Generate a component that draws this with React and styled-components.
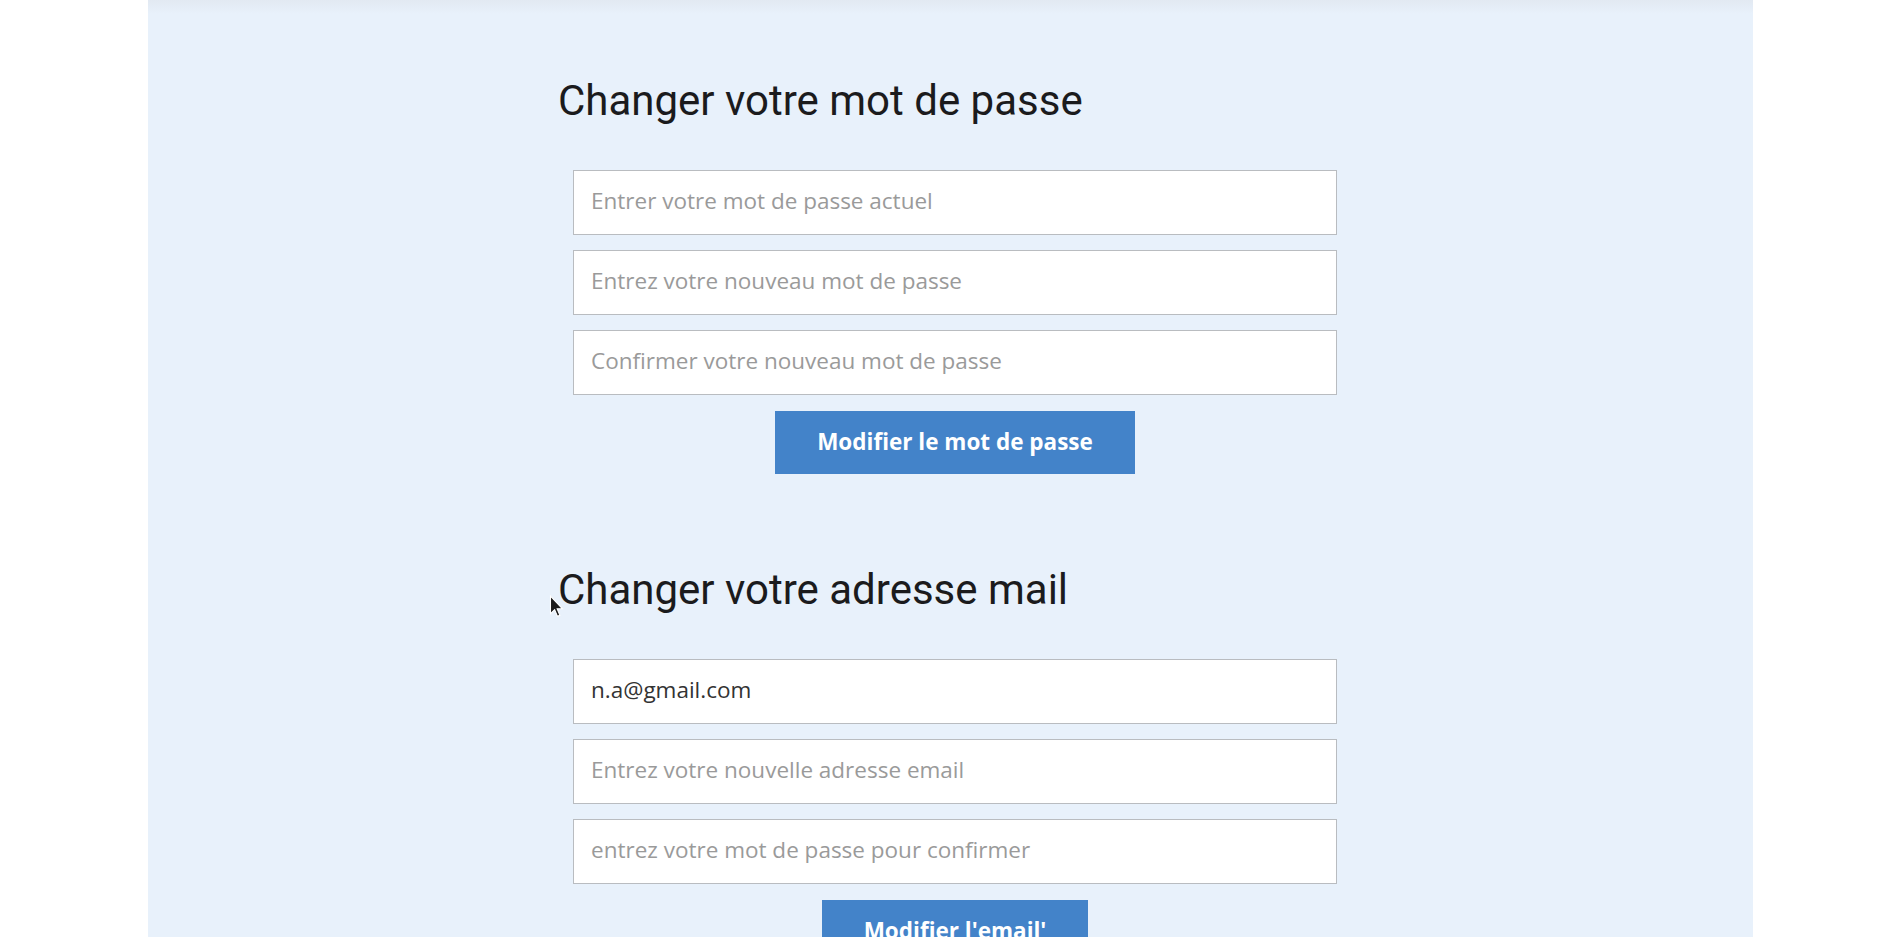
import { useState } from "react";
import styled, { createGlobalStyle } from "styled-components";

const GlobalStyle = createGlobalStyle`
  html, body {
    margin: 0;
    padding: 0;
    overflow: hidden;
    background: #ffffff;
  }
  * {
    box-sizing: border-box;
  }
`;

const App = () => {
  const [password, setPassword] = useState({ current: "", next: "", confirm: "" });
  const [email, setEmail] = useState({ current: "n.a@gmail.com", next: "", password: "" });

  const handlePassword = (field, value) => setPassword({ ...password, [field]: value });
  const handleEmail = (field, value) => setEmail({ ...email, [field]: value });

  return (
    <>
      <GlobalStyle />
      <Page>
        <Panel>
          <Form>
            <Section>
              <Title>Changer votre mot de passe</Title>
              <Fields>
                <Input
                  type="password"
                  value={password.current}
                  onChange={(e) => handlePassword("current", e.target.value)}
                  placeholder="Entrer votre mot de passe actuel"
                />
                <Input
                  type="password"
                  value={password.next}
                  onChange={(e) => handlePassword("next", e.target.value)}
                  placeholder="Entrez votre nouveau mot de passe"
                />
                <Input
                  type="password"
                  value={password.confirm}
                  onChange={(e) => handlePassword("confirm", e.target.value)}
                  placeholder="Confirmer votre nouveau mot de passe"
                />
                <ButtonRow>
                  <SubmitButton type="button">Modifier le mot de passe</SubmitButton>
                </ButtonRow>
              </Fields>
            </Section>

            <Section>
              <Title>Changer votre adresse mail</Title>
              <Fields>
                <Input
                  type="email"
                  value={email.current}
                  onChange={(e) => handleEmail("current", e.target.value)}
                />
                <Input
                  type="email"
                  value={email.next}
                  onChange={(e) => handleEmail("next", e.target.value)}
                  placeholder="Entrez votre nouvelle adresse email"
                />
                <Input
                  type="password"
                  value={email.password}
                  onChange={(e) => handleEmail("password", e.target.value)}
                  placeholder="entrez votre mot de passe pour confirmer"
                />
                <ButtonRow>
                  <SubmitButton type="button">Modifier l'email'</SubmitButton>
                </ButtonRow>
              </Fields>
            </Section>
          </Form>

          {/* pointeur de souris visible sur la capture */}
          <Cursor width="15" height="23" viewBox="0 0 13 21">
            <path
              d="M1 1 L1 17 L4.8 13.4 L7.4 19.5 L9.6 18.6 L7.1 12.6 L12 12.6 Z"
              fill="#1b1b1b"
              stroke="#ffffff"
              strokeWidth="1"
            />
          </Cursor>
        </Panel>
      </Page>
    </>
  );
};

const Page = styled.div`
  min-height: 100vh;
  background: #ffffff;
  padding-left: 148px;
`;

const Panel = styled.div`
  position: relative;
  width: 1605px;
  min-height: 100vh;
  background: linear-gradient(to bottom, #e2e9f2 0px, #e8f1fb 14px, #e8f1fb 100%);
  padding: 76px 0 0 410px;
`;

const Form = styled.div`
  width: 794px;
  display: flex;
  flex-direction: column;
  gap: 91px;
`;

const Section = styled.section`
  display: flex;
  flex-direction: column;
  gap: 44px;
`;

const Title = styled.h2`
  margin: 0;
  font-family: Roboto, "Liberation Sans", sans-serif;
  font-weight: 400;
  font-size: 42px;
  line-height: 50px;
  color: #1b1b1d;
`;

const Fields = styled.div`
  display: flex;
  flex-direction: column;
  gap: 15px;
  padding: 0 15px;
`;

const Input = styled.input`
  width: 100%;
  height: 65px;
  border: 1px solid #b9bcc0;
  border-radius: 0;
  background: #ffffff;
  padding: 0 17px 4px;
  font-family: "Open Sans", "Liberation Sans", sans-serif;
  font-size: 22.5px;
  color: #333333;
  outline: none;

  &::placeholder {
    color: #9a9a9a;
  }
`;

const ButtonRow = styled.div`
  display: flex;
  justify-content: center;
  padding-top: 1px;
`;

const SubmitButton = styled.button`
  height: 63px;
  padding: 0 42px 3px;
  border: none;
  border-radius: 0;
  background: #4383c9;
  color: #ffffff;
  font-family: "Open Sans", "Liberation Sans", sans-serif;
  font-weight: 700;
  font-size: 22.5px;
  cursor: pointer;
`;

const Cursor = styled.svg`
  position: absolute;
  left: 401px;
  top: 595px;
`;

export default App;
